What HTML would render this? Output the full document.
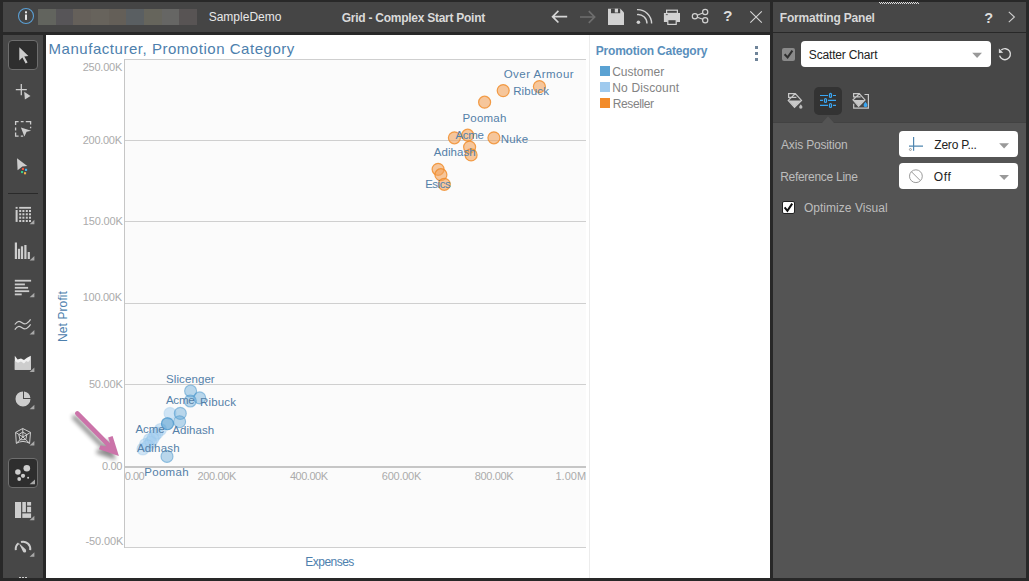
<!DOCTYPE html><html><head><meta charset="utf-8"><style>html,body{margin:0;padding:0}body{width:1029px;height:581px;overflow:hidden;position:relative;background:#282828;font-family:'Liberation Sans', sans-serif}</style></head><body><div style="position:absolute;left:3px;top:2px;width:767px;height:30px;background:#454545;"></div><div style="position:absolute;left:3px;top:35px;width:40px;height:543px;background:#474747;"></div><div style="position:absolute;left:46px;top:35px;width:724px;height:543px;background:#ffffff;"></div><div style="position:absolute;left:773px;top:2px;width:253px;height:30px;background:#474747;"></div><div style="position:absolute;left:773px;top:33px;width:253px;height:90px;background:#474747;"></div><div style="position:absolute;left:773px;top:123px;width:253px;height:455px;background:#545454;"></div><div style="position:absolute;left:773px;top:121.5px;width:253px;height:1.5px;background:#424242;"></div><div style="position:absolute;left:879px;top:2px;width:40px;height:1px;background:repeating-linear-gradient(90deg,#e0e0e0 0 1px,transparent 1px 2px);"></div><div style="position:absolute;left:880px;top:3px;width:39px;height:1px;background:repeating-linear-gradient(90deg,#e0e0e0 0 1px,transparent 1px 2px);"></div><svg style="position:absolute;left:15px;top:5px;" width="25" height="23" viewBox="15 5 25 23"><circle cx="26" cy="16" r="7.5" fill="none" stroke="#5a9fd4" stroke-width="1.1"/><rect x="25" y="11.3" width="2" height="2" fill="#e6e6e6"/><rect x="25" y="14.5" width="2" height="5.4" fill="#e6e6e6"/></svg><div style="position:absolute;left:38.0px;top:9px;width:17.97px;height:16px;background:#62645e;"></div><div style="position:absolute;left:55.67px;top:9px;width:17.97px;height:16px;background:#575558;"></div><div style="position:absolute;left:73.33px;top:9px;width:17.97px;height:16px;background:#65605a;"></div><div style="position:absolute;left:91.0px;top:9px;width:17.97px;height:16px;background:#67635c;"></div><div style="position:absolute;left:108.67px;top:9px;width:17.97px;height:16px;background:#645f58;"></div><div style="position:absolute;left:126.33px;top:9px;width:17.97px;height:16px;background:#5a5f62;"></div><div style="position:absolute;left:144.0px;top:9px;width:17.97px;height:16px;background:#66655c;"></div><div style="position:absolute;left:161.67px;top:9px;width:17.97px;height:16px;background:#666664;"></div><div style="position:absolute;left:179.33px;top:9px;width:17.97px;height:16px;background:#585454;"></div><div style="position:absolute;left:208.70px;top:11.15px;font:400 12px/12px 'Liberation Sans', sans-serif;color:#e8e8e8;letter-spacing:0.0px;white-space:nowrap;">SampleDemo</div><div style="position:absolute;left:341.80px;top:11.95px;font:700 12px/12px 'Liberation Sans', sans-serif;color:#dadada;letter-spacing:-0.264px;white-space:nowrap;">Grid - Complex Start Point</div><svg style="position:absolute;left:540px;top:0px;" width="230" height="32" viewBox="540 0 230 32"><path d="M567.2 16.7 H553 M558.4 10.9 L552.6 16.7 L558.4 22.5" fill="none" stroke="#d6d6d6" stroke-width="1.7"/><path d="M580 17 H594.2 M588.8 11.2 L594.6 17 L588.8 22.8" fill="none" stroke="#6e6e6e" stroke-width="1.7"/><path d="M608 8.7 H620.4 L624 12.6 V25 H608 Z" fill="#d2d2d2"/><rect x="611" y="8.7" width="9.2" height="4.5" fill="#454545"/><rect x="614.8" y="8.7" width="3.2" height="3.8" fill="#d2d2d2"/><circle cx="638.4" cy="22.2" r="1.8" fill="#d2d2d2"/><path d="M637 14.6 A9 9 0 0 1 647 23.6" fill="none" stroke="#d2d2d2" stroke-width="1.4"/><path d="M637 9.6 A14 14 0 0 1 651.6 23.6" fill="none" stroke="#d2d2d2" stroke-width="1.4"/><rect x="666.6" y="10.2" width="10.8" height="3.2" fill="none" stroke="#d2d2d2" stroke-width="1.2"/><rect x="663.9" y="13" width="16.1" height="9" fill="#d2d2d2"/><rect x="667.8" y="19.6" width="8.4" height="4.8" fill="#454545" stroke="#d2d2d2" stroke-width="1.2"/><rect x="665.8" y="14.2" width="2" height="0.9" fill="#555"/><circle cx="694.9" cy="16.2" r="2.6" fill="none" stroke="#d2d2d2" stroke-width="1.2"/><circle cx="705.2" cy="12" r="2.6" fill="none" stroke="#d2d2d2" stroke-width="1.2"/><circle cx="705.2" cy="20.3" r="2.6" fill="none" stroke="#d2d2d2" stroke-width="1.2"/><path d="M697.3 15.2 L702.8 13 M697.3 17.2 L702.8 19.3" stroke="#d2d2d2" stroke-width="1.2"/><path d="M750.3 11.3 L761.8 22.7 M761.8 11.3 L750.3 22.7" stroke="#d6d6d6" stroke-width="1.1"/></svg><div style="position:absolute;left:722.95px;top:8.35px;font:700 15.5px/15.5px 'Liberation Sans', sans-serif;color:#dcdcdc;letter-spacing:0.0px;white-space:nowrap;">?</div><div style="position:absolute;left:779.85px;top:12.05px;font:700 12px/12px 'Liberation Sans', sans-serif;color:#d8d8d8;letter-spacing:-0.193px;white-space:nowrap;">Formatting Panel</div><div style="position:absolute;left:984.35px;top:10.65px;font:700 14.5px/14.5px 'Liberation Sans', sans-serif;color:#dcdcdc;letter-spacing:0.0px;white-space:nowrap;">?</div><svg style="position:absolute;left:1000px;top:5px;" width="25" height="25" viewBox="1000 5 25 25"><path d="M1008.8 11.8 L1014.4 17 L1008.8 22.2" fill="none" stroke="#cfcfcf" stroke-width="1.1"/></svg><div style="position:absolute;left:782px;top:47.6px;width:13px;height:13.4px;background:#8a8a8a;border-radius:2px;"></div><svg style="position:absolute;left:780px;top:45px;" width="18" height="18" viewBox="780 45 18 18"><path d="M784.6 54.2 L787.6 57.4 L792.4 50.6" fill="none" stroke="#2e2e2e" stroke-width="2"/></svg><div style="position:absolute;left:801px;top:41px;width:190px;height:26px;background:#ffffff;border-radius:4px;"></div><div style="position:absolute;left:808.80px;top:48.80px;font:400 12px/12px 'Liberation Sans', sans-serif;color:#222222;letter-spacing:-0.167px;white-space:nowrap;">Scatter Chart</div><svg style="position:absolute;left:960px;top:45px;" width="70" height="25" viewBox="960 45 70 25"><path d="M972.2 52.7 H982 L977.1 57.9 Z" fill="#999"/><path d="M999.6 55.6 A5.5 5.5 0 1 0 1001.3 50" fill="none" stroke="#dcdcdc" stroke-width="1.4"/><path d="M998.9 48.4 L998.9 52.9 L1003.2 52.7 Z" fill="#dcdcdc"/></svg><div style="position:absolute;left:814px;top:87px;width:28px;height:28px;background:#333333;border-radius:5px;"></div><svg style="position:absolute;left:784px;top:88px;" width="90" height="36" viewBox="784 88 90 36"><path d="M822 123 L828 116.3 L834 123 Z" fill="#545454"/><path d="M788.6 93.6 H795.3 L801.5 100.4 L794.5 107.3 L788.3 100.4 L791.4 97.3 H788.6 Z M791.4 97.3 H796.4 M791.6 97.1 L795.2 93.8" fill="none" stroke="#c8c8c8" stroke-width="1.25" stroke-linejoin="miter"/><path d="M788.7 100.5 L801.1 100.5 L794.5 107.1 Z" fill="#c8c8c8"/><path d="M800.8 104.3 Q802.5 106.3 802.5 107 A1.7 1.7 0 0 1 799.1 107 Q799.1 106.3 800.8 104.3 Z" fill="#bdbdbd"/><g stroke="#3aa6f2" stroke-width="1.2" fill="none"><path d="M820 95.5 H828 M833 95.5 H836 M820 100.4 H823 M828 100.4 H836 M820 105.4 H828 M833 105.4 H836"/><rect x="829.5" y="93.4" width="2" height="4" rx="1"/><rect x="824.5" y="98.5" width="2" height="4" rx="1"/><rect x="829.5" y="103.5" width="2" height="4" rx="1"/></g><path d="M853.7 103.7 V108.1 H868.4 V94.5 H864.5" fill="none" stroke="#c8c8c8" stroke-width="1.2"/><path d="M853.6 93.6 H859.3 L865 99.9 L858.6 106.3 L853 99.9 L856.1 96.9 H853.6 Z M856.1 96.9 H860.6 M856.3 96.7 L859.4 93.8" fill="none" stroke="#c8c8c8" stroke-width="1.2"/><path d="M853.4 100 L864.6 100 L858.6 105.9 Z" fill="#c8c8c8"/><path d="M865.5 101.8 Q867.4 104.2 867.4 105.2 A1.9 1.9 0 0 1 863.6 105.2 Q863.6 104.2 865.5 101.8 Z" fill="#3aa6f2"/></svg><div style="position:absolute;left:781.00px;top:138.95px;font:400 12px/12px 'Liberation Sans', sans-serif;color:#bdbdbd;letter-spacing:-0.167px;white-space:nowrap;">Axis Position</div><div style="position:absolute;left:780.15px;top:171.15px;font:400 12px/12px 'Liberation Sans', sans-serif;color:#bdbdbd;letter-spacing:-0.285px;white-space:nowrap;">Reference Line</div><div style="position:absolute;left:899px;top:131.3px;width:119px;height:25.3px;background:#ffffff;border-radius:4px;"></div><div style="position:absolute;left:899px;top:163.4px;width:119px;height:25.4px;background:#ffffff;border-radius:4px;"></div><svg style="position:absolute;left:900px;top:130px;" width="120" height="60" viewBox="900 130 120 60"><path d="M913.6 137 V150.8 M909 146.1 H923" stroke="#4f86b0" stroke-width="1.2"/><circle cx="910.4" cy="149.5" r="1" fill="none" stroke="#888" stroke-width="0.8"/><path d="M999.2 143.2 H1009 L1004.1 148.4 Z" fill="#999"/><circle cx="915.9" cy="176.2" r="6.4" fill="none" stroke="#9a9a9a" stroke-width="1"/><path d="M911.4 171.7 L920.4 180.7" stroke="#9a9a9a" stroke-width="1"/><path d="M999.2 175 H1009 L1004.1 179.9 Z" fill="#999"/></svg><div style="position:absolute;left:934.35px;top:139.05px;font:400 12px/12px 'Liberation Sans', sans-serif;color:#222222;letter-spacing:-0.237px;white-space:nowrap;">Zero P...</div><div style="position:absolute;left:933.85px;top:171.10px;font:400 12px/12px 'Liberation Sans', sans-serif;color:#222222;letter-spacing:0.65px;white-space:nowrap;">Off</div><div style="position:absolute;left:781.5px;top:200.7px;width:13.8px;height:13.5px;background:#ffffff;border-radius:2px;box-sizing:border-box;border:1px solid #222;"></div><svg style="position:absolute;left:780px;top:198px;" width="18" height="18" viewBox="780 198 18 18"><path d="M784.6 207.4 L787.4 210.8 L792.2 203.6" fill="none" stroke="#111" stroke-width="2"/></svg><div style="position:absolute;left:803.90px;top:202.15px;font:400 12px/12px 'Liberation Sans', sans-serif;color:#bdbdbd;letter-spacing:0.043px;white-space:nowrap;">Optimize Visual</div><div style="position:absolute;left:124px;top:59px;width:462px;height:489px;background:#fbfbfb;"></div><div style="position:absolute;left:124px;top:59px;width:462px;height:1px;background:#cfcfcf;"></div><div style="position:absolute;left:124px;top:140px;width:462px;height:1px;background:#cfcfcf;"></div><div style="position:absolute;left:124px;top:221px;width:462px;height:1px;background:#cfcfcf;"></div><div style="position:absolute;left:124px;top:303px;width:462px;height:1px;background:#cfcfcf;"></div><div style="position:absolute;left:124px;top:384px;width:462px;height:1px;background:#cfcfcf;"></div><div style="position:absolute;left:124px;top:547px;width:462px;height:1px;background:#cfcfcf;"></div><div style="position:absolute;left:124px;top:466px;width:462px;height:2px;background:#c6c6c6;"></div><div style="position:absolute;left:124px;top:59px;width:1px;height:489px;background:#c6c6c6;"></div><div style="position:absolute;left:48.55px;top:41.45px;font:400 15px/15px 'Liberation Sans', sans-serif;color:#4d80ad;letter-spacing:0.532px;white-space:nowrap;">Manufacturer, Promotion Category</div><div style="position:absolute;left:82.75px;top:62.05px;font:400 11px/11px 'Liberation Sans', sans-serif;color:#ababab;letter-spacing:-0.25px;white-space:nowrap;">250.00K</div><div style="position:absolute;left:82.75px;top:134.90px;font:400 11px/11px 'Liberation Sans', sans-serif;color:#ababab;letter-spacing:-0.283px;white-space:nowrap;">200.00K</div><div style="position:absolute;left:82.85px;top:215.90px;font:400 11px/11px 'Liberation Sans', sans-serif;color:#ababab;letter-spacing:-0.183px;white-space:nowrap;">150.00K</div><div style="position:absolute;left:82.80px;top:291.80px;font:400 11px/11px 'Liberation Sans', sans-serif;color:#ababab;letter-spacing:-0.3px;white-space:nowrap;">100.00K</div><div style="position:absolute;left:88.90px;top:378.90px;font:400 11px/11px 'Liberation Sans', sans-serif;color:#ababab;letter-spacing:-0.2px;white-space:nowrap;">50.00K</div><div style="position:absolute;left:102.10px;top:460.95px;font:400 11px/11px 'Liberation Sans', sans-serif;color:#ababab;letter-spacing:-0.4px;white-space:nowrap;">0.00</div><div style="position:absolute;left:85.50px;top:536.00px;font:400 11px/11px 'Liberation Sans', sans-serif;color:#ababab;letter-spacing:-0.1px;white-space:nowrap;">-50.00K</div><div style="position:absolute;left:124.80px;top:470.85px;font:400 11px/11px 'Liberation Sans', sans-serif;color:#ababab;letter-spacing:-0.533px;white-space:nowrap;">0.00</div><div style="position:absolute;left:197.50px;top:470.85px;font:400 11px/11px 'Liberation Sans', sans-serif;color:#ababab;letter-spacing:-0.367px;white-space:nowrap;">200.00K</div><div style="position:absolute;left:289.90px;top:470.85px;font:400 11px/11px 'Liberation Sans', sans-serif;color:#ababab;letter-spacing:-0.467px;white-space:nowrap;">400.00K</div><div style="position:absolute;left:381.85px;top:470.85px;font:400 11px/11px 'Liberation Sans', sans-serif;color:#ababab;letter-spacing:-0.25px;white-space:nowrap;">600.00K</div><div style="position:absolute;left:474.75px;top:470.85px;font:400 11px/11px 'Liberation Sans', sans-serif;color:#ababab;letter-spacing:-0.35px;white-space:nowrap;">800.00K</div><div style="position:absolute;left:555.45px;top:470.85px;font:400 11px/11px 'Liberation Sans', sans-serif;color:#ababab;letter-spacing:0.025px;white-space:nowrap;">1.00M</div><div style="position:absolute;left:305.35px;top:555.90px;font:400 12px/12px 'Liberation Sans', sans-serif;color:#4d80ad;letter-spacing:-0.529px;white-space:nowrap;">Expenses</div><div style="position:absolute;left:57.4px;top:341.6px;transform-origin:0 0;transform:rotate(-90deg);font:400 12px/12px 'Liberation Sans', sans-serif;color:#4d80ad;white-space:nowrap;letter-spacing:0.1px">Net Profit</div><div style="position:absolute;left:589px;top:35px;width:1px;height:543px;background:#ececec;"></div><div style="position:absolute;left:595.80px;top:44.95px;font:700 12px/12px 'Liberation Sans', sans-serif;color:#5a8fbc;letter-spacing:-0.212px;white-space:nowrap;">Promotion Category</div><div style="position:absolute;left:600px;top:66px;width:10px;height:10px;background:#5aa2d3;"></div><div style="position:absolute;left:600px;top:82px;width:10px;height:10px;background:#9fcaee;"></div><div style="position:absolute;left:600px;top:98px;width:10px;height:10px;background:#f28b2a;"></div><div style="position:absolute;left:612.20px;top:65.80px;font:400 12px/12px 'Liberation Sans', sans-serif;color:#838383;letter-spacing:0.0px;white-space:nowrap;">Customer</div><div style="position:absolute;left:612.30px;top:81.90px;font:400 12px/12px 'Liberation Sans', sans-serif;color:#838383;letter-spacing:0.14px;white-space:nowrap;">No Discount</div><div style="position:absolute;left:612.75px;top:98.10px;font:400 12px/12px 'Liberation Sans', sans-serif;color:#838383;letter-spacing:-0.386px;white-space:nowrap;">Reseller</div><div style="position:absolute;left:755px;top:46px;width:3px;height:3px;background:#6f8499;"></div><div style="position:absolute;left:755px;top:52px;width:3px;height:3px;background:#6f8499;"></div><div style="position:absolute;left:755px;top:58px;width:3px;height:3px;background:#6f8499;"></div><svg style="position:absolute;left:124px;top:59px;" width="462" height="489" viewBox="124 59 462 489"><circle cx="539.4" cy="86.6" r="6" fill="#f4a35c" fill-opacity="0.6" stroke="#f08a24" stroke-opacity="0.8" stroke-width="1.2"/><circle cx="503.2" cy="90.6" r="6" fill="#f4a35c" fill-opacity="0.6" stroke="#f08a24" stroke-opacity="0.8" stroke-width="1.2"/><circle cx="484.6" cy="102.2" r="6" fill="#f4a35c" fill-opacity="0.6" stroke="#f08a24" stroke-opacity="0.8" stroke-width="1.2"/><circle cx="454.4" cy="137.8" r="6" fill="#f4a35c" fill-opacity="0.6" stroke="#f08a24" stroke-opacity="0.8" stroke-width="1.2"/><circle cx="467.7" cy="135.2" r="6" fill="#f4a35c" fill-opacity="0.6" stroke="#f08a24" stroke-opacity="0.8" stroke-width="1.2"/><circle cx="493.9" cy="137.8" r="6" fill="#f4a35c" fill-opacity="0.6" stroke="#f08a24" stroke-opacity="0.8" stroke-width="1.2"/><circle cx="469.6" cy="147.1" r="6" fill="#f4a35c" fill-opacity="0.6" stroke="#f08a24" stroke-opacity="0.8" stroke-width="1.2"/><circle cx="471.1" cy="154.9" r="6" fill="#f4a35c" fill-opacity="0.6" stroke="#f08a24" stroke-opacity="0.8" stroke-width="1.2"/><circle cx="438.1" cy="169.3" r="6" fill="#f4a35c" fill-opacity="0.6" stroke="#f08a24" stroke-opacity="0.8" stroke-width="1.2"/><circle cx="440.9" cy="174.7" r="6" fill="#f4a35c" fill-opacity="0.6" stroke="#f08a24" stroke-opacity="0.8" stroke-width="1.2"/><circle cx="444.3" cy="184.3" r="6" fill="#f4a35c" fill-opacity="0.6" stroke="#f08a24" stroke-opacity="0.8" stroke-width="1.2"/><circle cx="160.5" cy="429.5" r="6" fill="#a3cdef" fill-opacity="0.5" stroke="#8cbfe8" stroke-opacity="0.3" stroke-width="1.1"/><circle cx="155" cy="435" r="6" fill="#a3cdef" fill-opacity="0.5" stroke="#8cbfe8" stroke-opacity="0.3" stroke-width="1.1"/><circle cx="149.5" cy="439.5" r="6" fill="#a3cdef" fill-opacity="0.5" stroke="#8cbfe8" stroke-opacity="0.3" stroke-width="1.1"/><circle cx="145.5" cy="444.5" r="6" fill="#a3cdef" fill-opacity="0.5" stroke="#8cbfe8" stroke-opacity="0.3" stroke-width="1.1"/><circle cx="142.9" cy="449" r="6" fill="#a3cdef" fill-opacity="0.5" stroke="#8cbfe8" stroke-opacity="0.3" stroke-width="1.1"/><circle cx="151" cy="442" r="6" fill="#a3cdef" fill-opacity="0.5" stroke="#8cbfe8" stroke-opacity="0.3" stroke-width="1.1"/><circle cx="157" cy="433" r="6" fill="#a3cdef" fill-opacity="0.5" stroke="#8cbfe8" stroke-opacity="0.3" stroke-width="1.1"/><circle cx="153" cy="438.5" r="6" fill="#a3cdef" fill-opacity="0.5" stroke="#8cbfe8" stroke-opacity="0.3" stroke-width="1.1"/><circle cx="148" cy="446" r="6" fill="#a3cdef" fill-opacity="0.5" stroke="#8cbfe8" stroke-opacity="0.3" stroke-width="1.1"/><circle cx="190.6" cy="391" r="6" fill="#5aa2d3" fill-opacity="0.42" stroke="#4b97cc" stroke-opacity="0.55" stroke-width="1.1"/><circle cx="199.7" cy="397.9" r="6" fill="#5aa2d3" fill-opacity="0.42" stroke="#4b97cc" stroke-opacity="0.55" stroke-width="1.1"/><circle cx="190.3" cy="401" r="6" fill="#5aa2d3" fill-opacity="0.42" stroke="#4b97cc" stroke-opacity="0.55" stroke-width="1.1"/><circle cx="170" cy="413.4" r="6" fill="#a3cdef" fill-opacity="0.5" stroke="#8cbfe8" stroke-opacity="0.3" stroke-width="1.1"/><circle cx="180.3" cy="413.4" r="6" fill="#5aa2d3" fill-opacity="0.42" stroke="#4b97cc" stroke-opacity="0.55" stroke-width="1.1"/><circle cx="179.6" cy="421.7" r="6" fill="#5aa2d3" fill-opacity="0.42" stroke="#4b97cc" stroke-opacity="0.55" stroke-width="1.1"/><circle cx="167.5" cy="423.7" r="6" fill="#5aa2d3" fill-opacity="0.42" stroke="#4b97cc" stroke-opacity="0.55" stroke-width="1.1"/><circle cx="167.5" cy="423.7" r="6" fill="#5aa2d3" fill-opacity="0.42" stroke="#4b97cc" stroke-opacity="0.55" stroke-width="1.1"/><circle cx="167" cy="456.4" r="6" fill="#5aa2d3" fill-opacity="0.42" stroke="#4b97cc" stroke-opacity="0.55" stroke-width="1.1"/></svg><div style="position:absolute;left:503.70px;top:68.80px;font:400 11.5px/11.5px 'Liberation Sans', sans-serif;color:#5480a8;letter-spacing:0.48px;white-space:nowrap;">Over Armour</div><div style="position:absolute;left:513.15px;top:86.10px;font:400 11.5px/11.5px 'Liberation Sans', sans-serif;color:#5480a8;letter-spacing:0.14px;white-space:nowrap;">Ribuck</div><div style="position:absolute;left:462.45px;top:112.60px;font:400 11.5px/11.5px 'Liberation Sans', sans-serif;color:#5480a8;letter-spacing:0.22px;white-space:nowrap;">Poomah</div><div style="position:absolute;left:455.40px;top:129.65px;font:400 11.5px/11.5px 'Liberation Sans', sans-serif;color:#5480a8;letter-spacing:-0.267px;white-space:nowrap;">Acme</div><div style="position:absolute;left:500.65px;top:133.65px;font:400 11.5px/11.5px 'Liberation Sans', sans-serif;color:#5480a8;letter-spacing:0.233px;white-space:nowrap;">Nuke</div><div style="position:absolute;left:433.80px;top:147.20px;font:400 11.5px/11.5px 'Liberation Sans', sans-serif;color:#5480a8;letter-spacing:0.067px;white-space:nowrap;">Adihash</div><div style="position:absolute;left:425.20px;top:179.20px;font:400 11.5px/11.5px 'Liberation Sans', sans-serif;color:#5480a8;letter-spacing:-0.5px;white-space:nowrap;">Esics</div><div style="position:absolute;left:166.05px;top:373.85px;font:400 11.5px/11.5px 'Liberation Sans', sans-serif;color:#5480a8;letter-spacing:0.088px;white-space:nowrap;">Slicenger</div><div style="position:absolute;left:165.90px;top:395.30px;font:400 11.5px/11.5px 'Liberation Sans', sans-serif;color:#5480a8;letter-spacing:-0.2px;white-space:nowrap;">Acme</div><div style="position:absolute;left:200.00px;top:396.65px;font:400 11.5px/11.5px 'Liberation Sans', sans-serif;color:#5480a8;letter-spacing:0.16px;white-space:nowrap;">Ribuck</div><div style="position:absolute;left:135.45px;top:423.50px;font:400 11.5px/11.5px 'Liberation Sans', sans-serif;color:#5480a8;letter-spacing:-0.033px;white-space:nowrap;">Acme</div><div style="position:absolute;left:172.35px;top:425.45px;font:400 11.5px/11.5px 'Liberation Sans', sans-serif;color:#5480a8;letter-spacing:0.05px;white-space:nowrap;">Adihash</div><div style="position:absolute;left:136.95px;top:443.15px;font:400 11.5px/11.5px 'Liberation Sans', sans-serif;color:#5480a8;letter-spacing:0.183px;white-space:nowrap;">Adihash</div><div style="position:absolute;left:144.30px;top:466.80px;font:400 11.5px/11.5px 'Liberation Sans', sans-serif;color:#5480a8;letter-spacing:0.28px;white-space:nowrap;">Poomah</div><svg style="position:absolute;left:55px;top:400px;" width="80" height="70" viewBox="55 400 80 70"><defs><filter id="sh" x="-50%" y="-50%" width="200%" height="200%"><feGaussianBlur stdDeviation="2.3"/></filter></defs><g transform="translate(-3,4)" opacity="0.45" filter="url(#sh)"><path d="M77.3 413.4 L108 444.4" stroke="#000" stroke-width="4.6" stroke-linecap="round"/><path d="M118.9 456 L112.6 436.1 L108.1 437.4 L109.9 442.6 L105.8 446.4 L100.5 445.2 L99 449.2 Z" fill="#000"/></g><path d="M77.3 413.4 L108 444.4" stroke="#cb73a9" stroke-width="4.6" stroke-linecap="round"/><path d="M118.9 456 L112.6 436.1 L108.1 437.4 L109.9 442.6 L105.8 446.4 L100.5 445.2 L99 449.2 Z" fill="#cb73a9"/></svg><div style="position:absolute;left:8px;top:40px;width:30px;height:30px;background:#2e2e2e;box-sizing:border-box;border:1px solid #6e6e6e;border-radius:4px;"></div><div style="position:absolute;left:8px;top:458px;width:30px;height:30px;background:#2e2e2e;box-sizing:border-box;border:1px solid #6e6e6e;border-radius:4px;"></div><div style="position:absolute;left:8px;top:192.5px;width:30px;height:1.5px;background:#2a2a2a;"></div><div style="position:absolute;left:19px;top:577px;width:2px;height:1px;background:#cfcfcf;"></div><div style="position:absolute;left:22px;top:577px;width:2px;height:1px;background:#cfcfcf;"></div><div style="position:absolute;left:25px;top:577px;width:2px;height:1px;background:#cfcfcf;"></div><svg style="position:absolute;left:3px;top:35px;" width="40" height="543" viewBox="3 35 40 543"><path d="M19.3 47.2 L28.4 56.1 L24.3 56.6 L27.6 62.4 L25.6 63.4 L22.4 57.6 L19.3 60.4 Z" fill="#cdcdcd"/><path d="M21.3 84 V95.2 M15.8 89.6 H26.8" stroke="#cdcdcd" stroke-width="1.3"/><path d="M24.2 91.8 L30.5 96 L24.9 99.6 Z" fill="#cdcdcd"/><path d="M15.6 125 V121.7 H18.6 M20.8 121.7 H23.6 M25.8 121.7 H28.6 M28.6 121.7 H30.6 V124.6 M15.6 127.6 V130.4 M15.6 132.6 V136.1 H18.6 M20.8 136.1 H23.2 M30.6 126.8 V128.2" fill="none" stroke="#cdcdcd" stroke-width="1.3"/><path d="M20.9 127.4 L31.2 130.8 L26.6 131.8 L24.4 136.6 Z" fill="#cdcdcd"/><path d="M17 158.3 L27.3 165.9 L22.3 166.5 L17.6 170.2 Z" fill="#cdcdcd"/><rect x="21.9" y="167.9" width="2.1" height="2.1" fill="#e9553f"/><rect x="25" y="168.8" width="2.1" height="2.1" fill="#47b2f2"/><rect x="21" y="171" width="2.1" height="2.1" fill="#34cf8c"/><rect x="24" y="172.2" width="2.1" height="2.1" fill="#f0b24f"/><rect x="15.6" y="206.9" width="2" height="1.8" fill="#cdcdcd"/><rect x="15.6" y="210" width="2" height="11.9" fill="#cdcdcd"/><rect x="19.2" y="206.9" width="11.8" height="1.8" fill="#cdcdcd"/><rect x="19.2" y="210" width="2" height="2" fill="#cdcdcd"/><rect x="19.2" y="213.3" width="2" height="2" fill="#cdcdcd"/><rect x="19.2" y="216.7" width="2" height="2" fill="#cdcdcd"/><rect x="19.2" y="220" width="2" height="2" fill="#cdcdcd"/><rect x="22.4" y="210" width="2" height="2" fill="#cdcdcd"/><rect x="22.4" y="213.3" width="2" height="2" fill="#cdcdcd"/><rect x="22.4" y="216.7" width="2" height="2" fill="#cdcdcd"/><rect x="22.4" y="220" width="2" height="2" fill="#cdcdcd"/><rect x="25.8" y="210" width="2" height="2" fill="#cdcdcd"/><rect x="25.8" y="213.3" width="2" height="2" fill="#cdcdcd"/><rect x="25.8" y="216.7" width="2" height="2" fill="#cdcdcd"/><rect x="25.8" y="220" width="2" height="2" fill="#cdcdcd"/><rect x="29" y="210" width="2" height="2" fill="#cdcdcd"/><rect x="29" y="213.3" width="2" height="2" fill="#cdcdcd"/><rect x="29" y="216.7" width="2" height="2" fill="#cdcdcd"/><rect x="29" y="220" width="2" height="2" fill="#cdcdcd"/><path d="M29.6 224.3 H34.4 V219.70000000000002 Z" fill="#a8a8a8"/><rect x="14.8" y="242.5" width="2.2" height="16.5" fill="#cdcdcd"/><rect x="17.9" y="248.8" width="2.2" height="10.2" fill="#cdcdcd"/><rect x="20.9" y="246.3" width="2.2" height="12.7" fill="#cdcdcd"/><rect x="24.3" y="245" width="2.2" height="14.0" fill="#cdcdcd"/><rect x="27.7" y="252" width="2.2" height="7.0" fill="#cdcdcd"/><path d="M29.6 260.5 H34.4 V255.9 Z" fill="#a8a8a8"/><rect x="14.8" y="279.8" width="16.3" height="1.8" fill="#cdcdcd"/><rect x="14.8" y="283.5" width="10.1" height="1.8" fill="#cdcdcd"/><rect x="14.8" y="286.9" width="13.3" height="1.8" fill="#cdcdcd"/><rect x="14.8" y="290.3" width="14.4" height="1.8" fill="#cdcdcd"/><rect x="14.8" y="293.5" width="6.9" height="1.8" fill="#cdcdcd"/><path d="M29.6 297.3 H34.4 V292.7 Z" fill="#a8a8a8"/><path d="M14.8 324.5 C18 320, 20 321, 22.5 323 C25 325, 28 323.5, 30.6 319.4" fill="none" stroke="#cdcdcd" stroke-width="1.2"/><path d="M14.8 329.6 C18 325, 20 326, 22.5 328 C25 330, 28 328.5, 30.6 324.4" fill="none" stroke="#cdcdcd" stroke-width="1.2"/><path d="M29.6 334.5 H34.4 V329.9 Z" fill="#a8a8a8"/><path d="M14.8 355.8 L17.6 359.4 L21 358.4 L24 360 L27 357.8 L30.8 355.8 V369.7 H14.8 Z" fill="#f0f0f0"/><path d="M14.8 361 L18 362.8 L21 361.4 L24 363.4 L26.2 361 L28.2 362 L30.8 359 V369.7 H14.8 Z" fill="#cdcdcd"/><path d="M29.6 372 H34.4 V367.4 Z" fill="#a8a8a8"/><path d="M23 398.9 V391.4 A7.5 7.5 0 1 0 30.5 398.9 Z" fill="#cdcdcd"/><path d="M24 397.9 V391.47 A7.5 7.5 0 0 1 30.43 397.9 Z" fill="#cdcdcd"/><path d="M29.6 409.3 H34.4 V404.7 Z" fill="#a8a8a8"/><g fill="none" stroke="#cdcdcd" stroke-width="1"><path d="M22.7 428.5 L30.5 432.4 L29.6 443.3 Q23 439.6 16.3 443.3 L15.6 432.4 Z"/><path d="M22.8 432 L26.8 434.6 L25.8 439.6 L20 439.8 L18.8 434.6 Z"/><path d="M22.7 428.5 L23 437 M30.5 432.4 L23 437 M29.6 443.3 L23 437 M16.3 443.3 L23 437 M15.6 432.4 L23 437"/></g><path d="M29.6 445.5 H34.4 V440.9 Z" fill="#a8a8a8"/><circle cx="26.8" cy="468.2" r="3.3" fill="#cdcdcd"/><circle cx="17.9" cy="472" r="2.8" fill="#cdcdcd"/><circle cx="23" cy="475.8" r="2.1" fill="#cdcdcd"/><circle cx="19.2" cy="479" r="1.9" fill="#cdcdcd"/><circle cx="28.1" cy="477.7" r="1" fill="#cdcdcd"/><path d="M29.6 484.3 H35 V479.4 Z" fill="#a8a8a8"/><rect x="15" y="502" width="6.1" height="16" fill="#cdcdcd"/><rect x="22.3" y="502" width="3.6" height="10.2" fill="#cdcdcd"/><rect x="27.1" y="502" width="4" height="3.6" fill="#cdcdcd"/><rect x="27.1" y="506.8" width="4" height="5.4" fill="#cdcdcd"/><rect x="22.3" y="513.4" width="8.8" height="4.5" fill="#cdcdcd"/><path d="M29.6 520.3 H34.4 V515.6999999999999 Z" fill="#a8a8a8"/><path d="M15.8 550.2 A7.3 7.3 0 0 1 18.6 543.3 M21 542 A7.3 7.3 0 0 1 30.2 550.2" fill="none" stroke="#cdcdcd" stroke-width="2"/><path d="M18.8 543 L25.8 549.6 L23.2 552 Z" fill="#cdcdcd"/><circle cx="24.6" cy="550.9" r="1.6" fill="#cdcdcd"/><path d="M29.6 556.8 H34.4 V552.1999999999999 Z" fill="#a8a8a8"/></svg></body></html>
